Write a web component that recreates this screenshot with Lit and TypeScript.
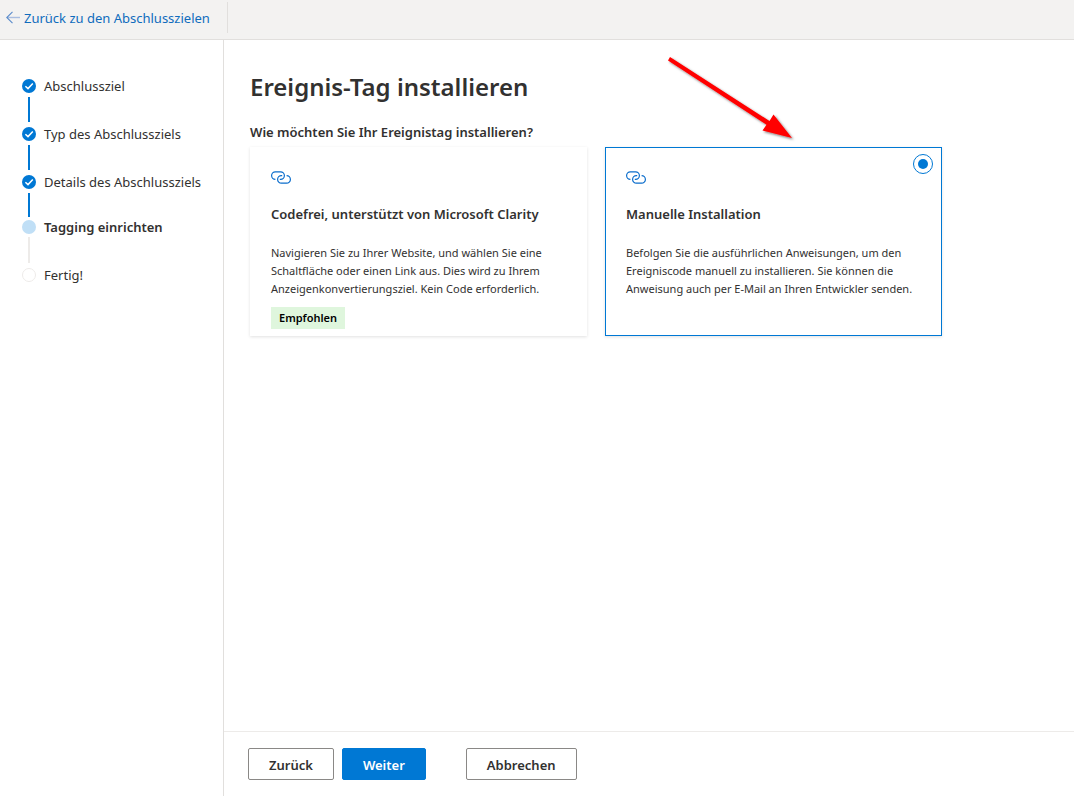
import { LitElement, html, css, svg, nothing } from "lit";
import { customElement, state } from "lit/decorators.js";
import { classMap } from "lit/directives/class-map.js";

type StepState = "done" | "current" | "open";

interface Step {
  label: string;
  state: StepState;
}

interface Method {
  id: string;
  title: string;
  text: string;
  badge?: string;
}

const STEPS: Step[] = [
  { label: "Abschlussziel", state: "done" },
  { label: "Typ des Abschlussziels", state: "done" },
  { label: "Details des Abschlussziels", state: "done" },
  { label: "Tagging einrichten", state: "current" },
  { label: "Fertig!", state: "open" },
];

const METHODS: Method[] = [
  {
    id: "clarity",
    title: "Codefrei, unterstützt von Microsoft Clarity",
    text: "Navigieren Sie zu Ihrer Website, und wählen Sie eine Schaltfläche oder einen Link aus. Dies wird zu Ihrem Anzeigenkonvertierungsziel. Kein Code erforderlich.",
    badge: "Empfohlen",
  },
  {
    id: "manual",
    title: "Manuelle Installation",
    text: "Befolgen Sie die ausführlichen Anweisungen, um den Ereigniscode manuell zu installieren. Sie können die Anweisung auch per E-Mail an Ihren Entwickler senden.",
  },
];

@customElement("step-list")
class StepList extends LitElement {
  static styles = css`
    :host {
      display: block;
    }
    ol {
      list-style: none;
      margin: 0;
      padding: 0;
    }
    .row {
      display: flex;
      align-items: center;
      gap: 8px;
      height: 22px;
      white-space: nowrap;
    }
    .dot {
      flex: none;
      display: block;
    }
    .bar {
      width: 2px;
      height: 25px;
      margin: 0 0 1px 6px;
      background: #0078d4;
    }
    .done:has(+ .current) .bar {
      height: 24px;
      margin-bottom: 0;
    }
    .current .row {
      height: 20px;
      font-weight: 600;
    }
    .current .bar {
      height: 26px;
      background: #edebe9;
    }
  `;

  private dot(s: StepState) {
    return html`<svg class="dot" width="14" height="14" viewBox="0 0 14 14" aria-hidden="true">
      ${s === "done"
        ? svg`<circle cx="7" cy="7" r="7" fill="#0078d4" />
            <path d="M3.4 7.2 6 9.6 10.8 4.6" fill="none" stroke="#fff" stroke-width="1.5" />`
        : s === "current"
          ? svg`<circle cx="7" cy="7" r="7" fill="#c0dff6" />`
          : svg`<circle cx="7" cy="7" r="6.5" fill="#fff" stroke="#edebe9" />`}
    </svg>`;
  }

  render() {
    return html`<ol>
      ${STEPS.map(
        (step, i) => html`<li
          class=${classMap({ [step.state]: true })}
          aria-current=${step.state === "current" ? "step" : nothing}
        >
          <div class="row">${this.dot(step.state)}<span>${step.label}</span></div>
          ${i < STEPS.length - 1 ? html`<div class="bar"></div>` : nothing}
        </li>`,
      )}
    </ol>`;
  }
}

@customElement("app-root")
class AppRoot extends LitElement {
  static styles = css`
    :host {
      display: flex;
      flex-direction: column;
      min-height: 100vh;
      box-sizing: border-box;
      background: #fff;
      color: #323130;
      font-family: "Noto Sans", sans-serif;
      font-size: 13px;
      line-height: 20px;
    }
    *,
    *::before {
      box-sizing: border-box;
    }
    .top {
      display: flex;
      height: 40px;
      background: #f3f2f1;
      border-bottom: 1px solid #e1dfdd;
      padding: 2px 0 6px 6px;
    }
    .back {
      display: flex;
      align-items: center;
      gap: 4px;
      padding-right: 17px;
      border-right: 1px solid #e1dfdd;
      color: #0f6cbd;
      text-decoration: none;
      white-space: nowrap;
    }
    .body {
      flex: 1;
      display: flex;
    }
    .side {
      flex: none;
      width: 224px;
      padding: 35px 0 0 22px;
      border-right: 1px solid #e1dfdd;
    }
    .content {
      flex: 1;
      min-width: 0;
      display: flex;
      flex-direction: column;
    }
    main {
      flex: 1;
      padding: 30px 26px;
    }
    h1 {
      margin: 0;
      font-size: 24px;
      line-height: 34px;
      font-weight: 600;
    }
    fieldset {
      border: 0;
      margin: 18px 0 0;
      padding: 0;
      min-width: 0;
    }
    legend {
      padding: 0;
      margin-bottom: 5px;
      font-weight: 600;
    }
    .cards {
      position: relative;
      display: grid;
      grid-template-columns: 1fr 1fr;
      gap: 18px;
      max-width: 692px;
    }
    .card {
      position: relative;
      display: flex;
      flex-direction: column;
      align-items: flex-start;
      min-height: 189px;
      padding: 23px 20px 6px;
      border: 1px solid transparent;
      box-shadow: 0 1px 3px rgba(0, 0, 0, 0.12);
      cursor: pointer;
    }
    .card.selected {
      border-color: #0078d4;
    }
    .title {
      margin-top: 19px;
      font-weight: 600;
    }
    .text {
      margin-top: 20px;
      font-size: 11px;
      line-height: 18px;
    }
    .badge {
      margin-top: 9px;
      padding: 0 8px;
      background: #dff6dd;
      color: #000;
      font-size: 11px;
      line-height: 22px;
      font-weight: 600;
    }
    .radio {
      appearance: none;
      position: absolute;
      top: 6px;
      right: 8px;
      display: grid;
      place-items: center;
      width: 20px;
      height: 20px;
      margin: 0;
      border: 1px solid #0078d4;
      border-radius: 50%;
      opacity: 0;
    }
    .radio:checked {
      opacity: 1;
    }
    .radio::before {
      content: "";
      width: 10px;
      height: 10px;
      border-radius: 50%;
      background: #0078d4;
    }
    .pointer {
      position: absolute;
      top: -93px;
      right: 144px;
      pointer-events: none;
    }
    footer {
      display: flex;
      gap: 8px;
      padding: 16px 24px;
      border-top: 1px solid #edebe9;
    }
    button {
      height: 32px;
      padding: 1px 20px 0;
      border: 1px solid #8a8886;
      border-radius: 2px;
      background: #fff;
      color: #323130;
      font: inherit;
      font-weight: 600;
    }
    .primary {
      border-color: #0078d4;
      background: #0078d4;
      color: #fff;
    }
    .cancel {
      margin-left: 32px;
    }
  `;

  @state() private selected = "manual";

  private linkIcon() {
    return html`<svg width="20" height="14" viewBox="0 0 20 14" fill="none" stroke="#0b6dcc" stroke-width="1.2" aria-hidden="true">
      <path d="M4.4 8.4A3.8 3.8 0 0 1 4.4 .8H9.6A3.8 3.8 0 0 1 9.6 8.4H8.8" />
      <path d="M15.6 4.600A3.8 3.8 0 0 1 15.6 12.2H10.4A3.8 3.8 0 0 1 10.400 4.600H11.2" />
    </svg>`;
  }

  private card(m: Method) {
    const on = this.selected === m.id;
    return html`<label class=${classMap({ card: true, selected: on })}>
      <input
        class="radio"
        type="radio"
        name="method"
        .checked=${on}
        @change=${() => (this.selected = m.id)}
      />
      ${this.linkIcon()}
      <span class="title">${m.title}</span>
      <span class="text">${m.text}</span>
      ${m.badge ? html`<span class="badge">${m.badge}</span>` : nothing}
    </label>`;
  }

  render() {
    return html`
      <header class="top">
        <a class="back" href="#">
          <svg width="14" height="14" viewBox="0 0 14 14" fill="none" aria-hidden="true">
            <path d="M1 6.5h13" stroke="#a9bde0" stroke-width="1.4" />
            <path d="M6.500 .8.8 6.500l5.700 5.700" stroke="#5b8ccb" stroke-width="1.1" />
          </svg>
          <span>Zurück zu den Abschlusszielen</span>
        </a>
      </header>
      <div class="body">
        <nav class="side" aria-label="Schritte"><step-list></step-list></nav>
        <div class="content">
          <main>
            <h1>Ereignis-Tag installieren</h1>
            <fieldset>
              <legend>Wie möchten Sie Ihr Ereignistag installieren?</legend>
              <div class="cards">
                ${METHODS.map((m) => this.card(m))}
                <svg class="pointer" width="136" height="90" viewBox="662 54 136 90" aria-hidden="true">
                  <defs>
                    <filter id="shade" x="-10%" y="-10%" width="130%" height="130%">
                      <feDropShadow dx="1.5" dy="1.5" stdDeviation="1" flood-opacity="0.5" />
                    </filter>
                  </defs>
                  <path
                    d="M670 57 769.500 121 773.500 114.500 792 138 762.500 130.500 766.500 124.700 668 60.500Z"
                    fill="#f00"
                    filter="url(#shade)"
                  />
                </svg>
              </div>
            </fieldset>
          </main>
          <footer>
            <button type="button">Zurück</button>
            <button type="button" class="primary">Weiter</button>
            <button type="button" class="cancel">Abbrechen</button>
          </footer>
        </div>
      </div>
    `;
  }
}
